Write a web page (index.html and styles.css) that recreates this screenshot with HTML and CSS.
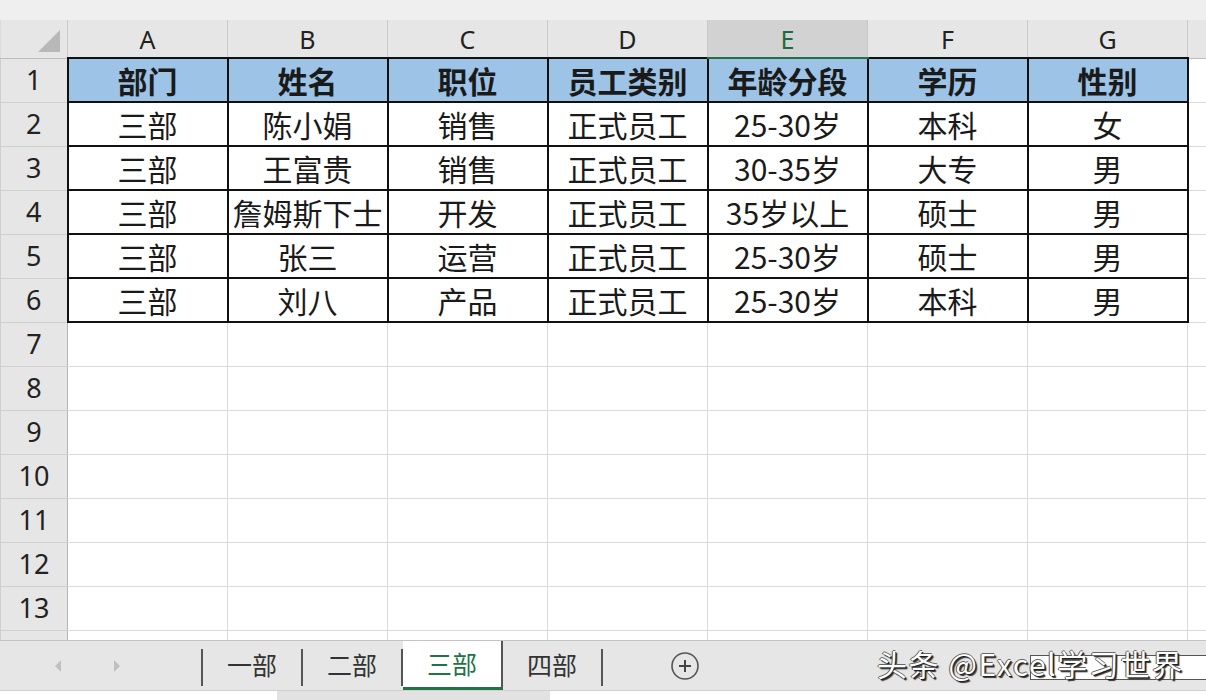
FILE: index.html
```html
<!DOCTYPE html>
<html lang="zh-CN">

<head>
    <meta charset="UTF-8">
    <meta name="viewport" content="width=device-width, initial-scale=1.0">
    <title>三部</title>
    <link rel="stylesheet" href="styles.css">
</head>

<body>
    <div class="formula-edge"></div>
    <div class="sheet-wrap">
        <table class="sheet">
            <colgroup>
                <col class="col-head">
                <col class="col-cell">
                <col class="col-cell">
                <col class="col-cell">
                <col class="col-cell">
                <col class="col-cell">
                <col class="col-cell">
                <col class="col-cell">
                <col class="col-rest">
            </colgroup>
            <thead>
                <tr>
                    <th class="corner"><span class="corner-tri"></span></th>
                    <th>A</th>
                    <th>B</th>
                    <th>C</th>
                    <th>D</th>
                    <th class="sel">E</th>
                    <th>F</th>
                    <th>G</th>
                    <th></th>
                </tr>
            </thead>
            <tbody>
                <tr class="title">
                    <th>1</th>
                    <td class="d">部门</td>
                    <td class="d">姓名</td>
                    <td class="d">职位</td>
                    <td class="d">员工类别</td>
                    <td class="d">年龄分段</td>
                    <td class="d">学历</td>
                    <td class="d">性别</td>
                    <td></td>
                </tr>
                <tr>
                    <th>2</th>
                    <td class="d">三部</td>
                    <td class="d">陈小娟</td>
                    <td class="d">销售</td>
                    <td class="d">正式员工</td>
                    <td class="d">25-30岁</td>
                    <td class="d">本科</td>
                    <td class="d">女</td>
                    <td></td>
                </tr>
                <tr>
                    <th>3</th>
                    <td class="d">三部</td>
                    <td class="d">王富贵</td>
                    <td class="d">销售</td>
                    <td class="d">正式员工</td>
                    <td class="d">30-35岁</td>
                    <td class="d">大专</td>
                    <td class="d">男</td>
                    <td></td>
                </tr>
                <tr>
                    <th>4</th>
                    <td class="d">三部</td>
                    <td class="d">詹姆斯下士</td>
                    <td class="d">开发</td>
                    <td class="d">正式员工</td>
                    <td class="d">35岁以上</td>
                    <td class="d">硕士</td>
                    <td class="d">男</td>
                    <td></td>
                </tr>
                <tr>
                    <th>5</th>
                    <td class="d">三部</td>
                    <td class="d">张三</td>
                    <td class="d">运营</td>
                    <td class="d">正式员工</td>
                    <td class="d">25-30岁</td>
                    <td class="d">硕士</td>
                    <td class="d">男</td>
                    <td></td>
                </tr>
                <tr>
                    <th>6</th>
                    <td class="d">三部</td>
                    <td class="d">刘八</td>
                    <td class="d">产品</td>
                    <td class="d">正式员工</td>
                    <td class="d">25-30岁</td>
                    <td class="d">本科</td>
                    <td class="d">男</td>
                    <td></td>
                </tr>
                <tr><th>7</th><td></td><td></td><td></td><td></td><td></td><td></td><td></td><td></td></tr>
                <tr><th>8</th><td></td><td></td><td></td><td></td><td></td><td></td><td></td><td></td></tr>
                <tr><th>9</th><td></td><td></td><td></td><td></td><td></td><td></td><td></td><td></td></tr>
                <tr><th>10</th><td></td><td></td><td></td><td></td><td></td><td></td><td></td><td></td></tr>
                <tr><th>11</th><td></td><td></td><td></td><td></td><td></td><td></td><td></td><td></td></tr>
                <tr><th>12</th><td></td><td></td><td></td><td></td><td></td><td></td><td></td><td></td></tr>
                <tr><th>13</th><td></td><td></td><td></td><td></td><td></td><td></td><td></td><td></td></tr>
                <tr><th></th><td></td><td></td><td></td><td></td><td></td><td></td><td></td><td></td></tr>
            </tbody>
        </table>
    </div>

    <!-- sheet tabs -->
    <div class="tabbar">
        <div class="nav">
            <span class="arrow arrow-left"></span>
            <span class="arrow arrow-right"></span>
        </div>
        <div class="tabs">
            <span class="tab">一部</span>
            <span class="tab">二部</span>
            <span class="tab active">三部</span>
            <span class="tab">四部</span>
        </div>
        <div class="add">
            <svg width="30" height="30" viewBox="0 0 30 30">
                <circle cx="15" cy="15" r="13" fill="none" stroke="#555" stroke-width="1.6" />
                <path d="M15 9v12M9 15h12" stroke="#444" stroke-width="2" />
            </svg>
        </div>
        <div class="mark">
            <span class="mark-box"></span>
            <span class="mark-text">头条 @Excel学习世界</span>
        </div>
    </div>
    <div class="hscroll">
        <span class="hs-a"></span>
        <span class="hs-thumb"></span>
        <span class="hs-b"></span>
    </div>
</body>

</html>
```

FILE: styles.css
```css
body {
    margin: 0;
    width: 1206px;
    height: 700px;
    overflow: hidden;
    display: flex;
    flex-direction: column;
    background-color: #ffffff;
    font-family: "Noto Sans CJK SC", "Noto Sans", sans-serif;
    color: #1a1a1a;
}

.formula-edge {
    height: 20px;
    background-color: #efefef;
    flex-shrink: 0;
}

.sheet-wrap {
    height: 620px;
    overflow: hidden;
    flex-shrink: 0;
}

/* grid */
.sheet {
    border-collapse: collapse;
    table-layout: fixed;
    width: 1206px;
}

.col-head {
    width: 67px;
}

.col-cell {
    width: 160px;
}

.col-rest {
    width: 19px;
}

.sheet th,
.sheet td {
    padding: 0;
    height: 43px;
    line-height: 1.2;
    border: 1px solid #dadada;
    text-align: center;
    vertical-align: middle;
    white-space: nowrap;
    overflow: hidden;
}

.sheet thead th {
    height: 35px;
    background-color: #e6e6e6;
    font-family: "Noto Sans", sans-serif;
    font-weight: normal;
    font-size: 25px;
    color: #222;
    border-top: none;
    border-right: 1px solid #c9c9c9;
    border-bottom: 1px solid #bdbdbd;
    line-height: 1;
    padding-top: 2px;
}

.sheet thead th.sel {
    background-color: #d2d2d2;
    color: #1e6b3f;
    border-bottom: 2px solid #217346;
}

.corner {
    position: relative;
}

.corner-tri {
    position: absolute;
    right: 7px;
    bottom: 6px;
    width: 0;
    height: 0;
    border-left: 22px solid transparent;
    border-bottom: 22px solid #b8b8b8;
}

.sheet tbody th {
    background-color: #e6e6e6;
    font-family: "Noto Sans", sans-serif;
    font-weight: normal;
    font-size: 27px;
    color: #222;
    border-color: #cfcfcf;
    border-right: 1px solid #b5b5b5;
}

.sheet td {
    font-size: 30px;
}

.sheet td.d {
    height: 42px;
    border: 2px solid #111;
}

.title td.d {
    background-color: #9dc3e6;
    font-weight: bold;
}

/* sheet tabs */
.tabbar {
    height: 49px;
    flex-shrink: 0;
    display: flex;
    align-items: stretch;
    background-color: #e6e6e6;
    border-top: 1px solid #c4c4c4;
    position: relative;
}

.nav {
    width: 201px;
    display: flex;
    align-items: center;
    padding-left: 55px;
    box-sizing: border-box;
    gap: 53px;
}

.arrow {
    width: 0;
    height: 0;
    border-top: 6px solid transparent;
    border-bottom: 6px solid transparent;
}

.arrow-left {
    border-right: 6px solid #c0c0c0;
}

.arrow-right {
    border-left: 6px solid #c0c0c0;
}

.tabs {
    display: flex;
    align-items: stretch;
    border-left: 2px solid #555;
    margin: 8px 0 4px;
}

.tab {
    width: 98px;
    display: flex;
    align-items: center;
    justify-content: center;
    font-size: 25px;
    color: #333;
    border-right: 2px solid #555;
    padding-bottom: 8px;
}

.tab.active {
    background-color: #ffffff;
    color: #217346;
    margin: -8px 0 -4px;
    padding-bottom: 3px;
    border-bottom: 3px solid #217346;
}

.add {
    margin-left: 67px;
    display: flex;
    align-items: center;
}

.mark {
    position: absolute;
    left: 877px;
    top: 0;
    height: 46px;
    width: 329px;
}

.mark-box {
    position: absolute;
    left: 153px;
    top: 14px;
    width: 180px;
    height: 23px;
    background-color: #ffffff;
    border: 1px solid #555;
}

.mark-text {
    position: absolute;
    left: 0;
    top: 3px;
    font-size: 30px;
    letter-spacing: 1.6px;
    line-height: 38px;
    color: #ffffff;
    white-space: nowrap;
    text-shadow: 1px 1px 0 #222, -1px 0 0 #555, 0 -1px 0 #666, 2px 2px 1px #333;
}

.hscroll {
    height: 10px;
    flex-shrink: 0;
    display: flex;
    background-color: #f0f0f0;
    border-top: 1px solid #d0d0d0;
}

.hs-a {
    width: 277px;
    background-color: #ffffff;
}

.hs-thumb {
    width: 273px;
    background-color: #e2e2e2;
}

.hs-b {
    flex: 1;
    background-color: #ffffff;
}
```
